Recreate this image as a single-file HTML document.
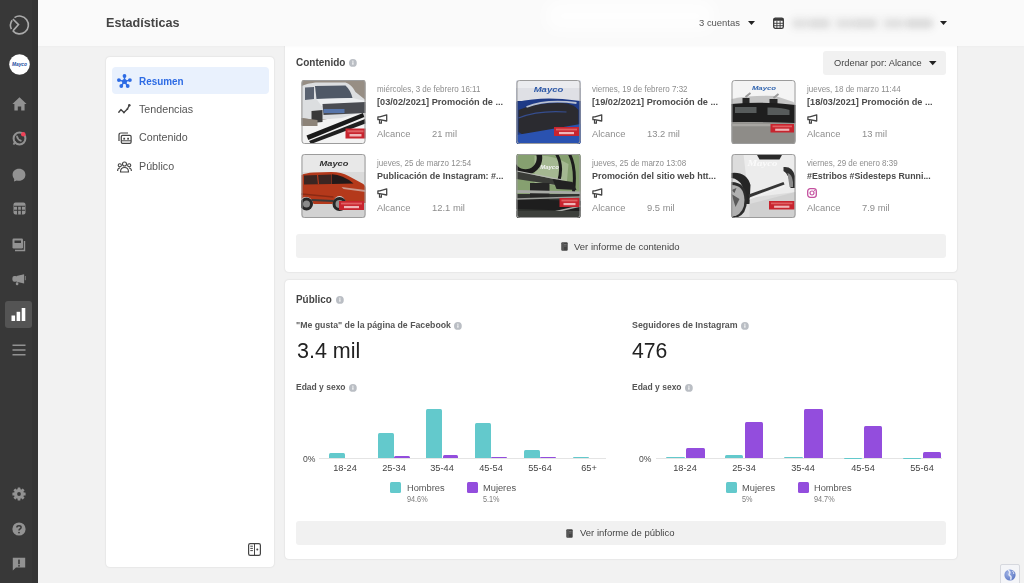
<!DOCTYPE html>
<html><head><meta charset="utf-8">
<style>
*{box-sizing:border-box;margin:0;padding:0}
html,body{width:1024px;height:583px;overflow:hidden;background:#f2f2f2;font-family:"Liberation Sans",sans-serif;color:#444}
.abs{position:absolute}
.t{position:absolute;white-space:nowrap;line-height:1}
.card{position:absolute;background:#fff;border-radius:4px;box-shadow:0 0 2px rgba(0,0,0,0.14)}
</style></head><body>

<div class="abs" style="left:0px;top:0px;width:38px;height:583px;background:#383838;"></div>
<div class="abs" style="left:32px;top:0px;width:6px;height:583px;background:#353535;"></div>
<svg class="abs" style="left:9.15px;top:15.2px;overflow:visible;" width="20" height="20" viewBox="0 0 20 20"><path d="M5.5 2.6 A8.9 8.9 0 1 1 3.85 15.9" fill="none" stroke="#ababab" stroke-width="1.6"/><path d="M3.2 5.2 A8.9 8.9 0 0 0 2.4 14.2" fill="none" stroke="#ababab" stroke-width="1.6"/><path d="M3.9 4.0 L9.5 9.6 L3.9 15.9" fill="none" stroke="#ababab" stroke-width="1.6" stroke-linejoin="miter"/></svg>
<svg class="abs" style="left:8.5px;top:54px;overflow:visible;" width="21" height="21" viewBox="0 0 21 21"><circle cx="10.5" cy="10.5" r="10.3" fill="#fff"/><text x="10.5" y="12.2" font-family="Liberation Sans" font-size="5.6" font-weight="bold" font-style="italic" fill="#1f4f9f" text-anchor="middle" textLength="15" lengthAdjust="spacingAndGlyphs">Mayco</text></svg>
<svg class="abs" style="left:11.8px;top:96.8px;overflow:visible;" width="15" height="14" viewBox="0 0 15 14"><path d="M7.5 0.3 L14.6 7 L12.6 7 L12.6 13.6 L9.2 13.6 L9.2 9.4 L5.8 9.4 L5.8 13.6 L2.4 13.6 L2.4 7 L0.4 7 Z" fill="#929292"/></svg>
<svg class="abs" style="left:11.5px;top:131px;overflow:visible;" width="15" height="15" viewBox="0 0 15 15"><circle cx="7.5" cy="7.5" r="5.9" fill="none" stroke="#929292" stroke-width="2"/><path d="M5 5.3 q0.6 3.2 3.8 4.4" fill="none" stroke="#929292" stroke-width="1.8" stroke-linecap="round"/><path d="M1.6 13.6 L3.2 10" stroke="#929292" stroke-width="1.8"/></svg>
<svg class="abs" style="left:21.2px;top:131.9px;overflow:visible;" width="5" height="5" viewBox="0 0 5 5"><circle cx="2.3" cy="2.3" r="2.3" fill="#ee4258"/></svg>
<svg class="abs" style="left:12px;top:167.5px;overflow:visible;" width="14" height="14" viewBox="0 0 14 14"><path d="M7 0.8 C10.8 0.8 13.4 3.3 13.4 6.8 C13.4 10.3 10.8 12.8 7 12.8 C6.2 12.8 5.5 12.7 4.8 12.5 L2 13.5 L2.2 11 C1.2 9.9 0.6 8.5 0.6 6.8 C0.6 3.3 3.2 0.8 7 0.8 Z" fill="#929292"/></svg>
<svg class="abs" style="left:12.5px;top:202px;overflow:visible;" width="13" height="13" viewBox="0 0 13 13"><rect x="0.5" y="0.5" width="12" height="12" rx="2" fill="#929292"/><path d="M1 4.3h11M1 8.3h11M4.6 4.3v8.5M8.4 4.3v8.5" stroke="#383838" stroke-width="1.1"/></svg>
<svg class="abs" style="left:12px;top:237.5px;overflow:visible;" width="14" height="14" viewBox="0 0 14 14"><rect x="0.5" y="0.5" width="10.5" height="10" rx="1.2" fill="#929292"/><path d="M12.5 3 v9.5 h-9.5" fill="none" stroke="#929292" stroke-width="1.4"/><rect x="2.5" y="2.5" width="6.5" height="2.5" fill="#383838"/></svg>
<svg class="abs" style="left:12px;top:272.5px;overflow:visible;" width="15" height="13" viewBox="0 0 15 13"><rect x="0.4" y="3" width="5" height="5.7" rx="2" fill="#929292"/><path d="M4.5 3 L12.1 1.2 V10.6 L4.5 8.7 Z" fill="#929292"/><rect x="3.8" y="9.3" width="2.6" height="3" rx="1.2" fill="#929292"/><rect x="12.8" y="3" width="1.1" height="4.2" fill="#929292" opacity="0.7"/></svg>
<div class="abs" style="left:5px;top:301px;width:27px;height:27px;background:#545454;border-radius:3px"></div>
<svg class="abs" style="left:11px;top:307px;overflow:visible;" width="15" height="14" viewBox="0 0 15 14"><rect x="0.5" y="8.5" width="3.6" height="5.5" fill="#fff"/><rect x="5.6" y="4.8" width="3.6" height="9.2" fill="#fff"/><rect x="10.7" y="1" width="3.6" height="13" fill="#fff"/></svg>
<svg class="abs" style="left:12px;top:344px;overflow:visible;" width="14" height="12" viewBox="0 0 14 12"><path d="M0.5 1.2h13M0.5 6h13M0.5 10.8h13" stroke="#929292" stroke-width="1.5"/></svg>
<svg class="abs" style="left:12px;top:487px;overflow:visible;" width="14" height="14" viewBox="0 0 14 14"><circle cx="7" cy="7" r="4.9" fill="#929292"/><rect x="5.6" y="0.4" width="2.8" height="3.2" rx="0.5" fill="#929292" transform="rotate(0 7 7)"/><rect x="5.6" y="0.4" width="2.8" height="3.2" rx="0.5" fill="#929292" transform="rotate(45 7 7)"/><rect x="5.6" y="0.4" width="2.8" height="3.2" rx="0.5" fill="#929292" transform="rotate(90 7 7)"/><rect x="5.6" y="0.4" width="2.8" height="3.2" rx="0.5" fill="#929292" transform="rotate(135 7 7)"/><rect x="5.6" y="0.4" width="2.8" height="3.2" rx="0.5" fill="#929292" transform="rotate(180 7 7)"/><rect x="5.6" y="0.4" width="2.8" height="3.2" rx="0.5" fill="#929292" transform="rotate(225 7 7)"/><rect x="5.6" y="0.4" width="2.8" height="3.2" rx="0.5" fill="#929292" transform="rotate(270 7 7)"/><rect x="5.6" y="0.4" width="2.8" height="3.2" rx="0.5" fill="#929292" transform="rotate(315 7 7)"/><circle cx="7" cy="7" r="1.9" fill="#383838"/></svg>
<svg class="abs" style="left:12px;top:522px;overflow:visible;" width="14" height="14" viewBox="0 0 14 14"><circle cx="7" cy="7" r="6.6" fill="#929292"/><path d="M4.9 5.4 C4.9 3.2 9.1 3.2 9.1 5.4 C9.1 6.9 7 6.9 7 8.6" fill="none" stroke="#383838" stroke-width="1.5"/><circle cx="7" cy="10.6" r="0.9" fill="#383838"/></svg>
<svg class="abs" style="left:12px;top:556.5px;overflow:visible;" width="14" height="14" viewBox="0 0 14 14"><path d="M0.8 0.8 H13.2 V10.5 H4 L0.8 13.4 Z" fill="#929292"/><rect x="6.2" y="2.6" width="1.6" height="4.6" fill="#383838"/><rect x="6.2" y="8.1" width="1.6" height="1.5" fill="#383838"/></svg>
<div class="card" style="left:106px;top:57px;width:168px;height:510px"></div>
<div class="abs" style="left:112px;top:67px;width:157px;height:27px;background:#e9f1fd;border-radius:4px"></div>
<svg class="abs" style="left:117px;top:74px;overflow:visible;" width="15" height="15" viewBox="0 0 15 15"><path d="M7.5 7.5 L7.5 2 M7.5 7.5 L1.8 6.1 M7.5 7.5 L12.8 6.1 M7.5 7.5 L4.2 12 M7.5 7.5 L10.6 12" stroke="#2d6be4" stroke-width="1.4"/><circle cx="7.5" cy="7.5" r="2.5" fill="#2d6be4"/><circle cx="7.5" cy="2" r="1.9" fill="#2d6be4"/><circle cx="1.9" cy="6.1" r="1.9" fill="#2d6be4"/><circle cx="12.9" cy="6.1" r="1.9" fill="#2d6be4"/><circle cx="4.3" cy="12" r="1.9" fill="#2d6be4"/><circle cx="10.7" cy="12" r="1.9" fill="#2d6be4"/></svg>
<div class="t" style="left:138.50px;top:75.76px;font-size:10.69px;font-weight:bold;color:#2d6be4;transform-origin:0 50%;transform:scaleX(0.9259);">Resumen</div>
<svg class="abs" style="left:118px;top:104px;overflow:visible;" width="13" height="10" viewBox="0 0 13 10"><path d="M0.8 8.3 L2.9 5.6 L5.9 8.4 L9.4 5 L11.3 1.3" fill="none" stroke="#444" stroke-width="1.4" stroke-linejoin="round" stroke-linecap="round"/><circle cx="11.3" cy="1.3" r="1.25" fill="#444"/><circle cx="5.9" cy="8.4" r="0.9" fill="#444"/><circle cx="9.4" cy="5" r="0.9" fill="#444"/></svg>
<div class="t" style="left:138.50px;top:103.55px;font-size:11.13px;font-weight:normal;color:#555;transform-origin:0 50%;transform:scaleX(0.9615);">Tendencias</div>
<svg class="abs" style="left:117.5px;top:131.5px;overflow:visible;" width="14" height="12" viewBox="0 0 14 12"><path d="M1 9 V3 Q1 1 3 1 H10" fill="none" stroke="#444" stroke-width="1.2"/><rect x="3.3" y="3.3" width="9.8" height="8" rx="1.3" fill="none" stroke="#444" stroke-width="1.2"/><rect x="5.3" y="5.8" width="1.8" height="1.8" fill="#444"/><rect x="9.2" y="5.8" width="1.8" height="1.8" fill="#444"/><path d="M3.5 8.8h9.5" stroke="#444" stroke-width="1"/></svg>
<div class="t" style="left:138.50px;top:132.05px;font-size:11.13px;font-weight:normal;color:#555;transform-origin:0 50%;transform:scaleX(0.9615);">Contenido</div>
<svg class="abs" style="left:117px;top:160.5px;overflow:visible;" width="15" height="12" viewBox="0 0 15 12"><circle cx="7.5" cy="3" r="2" fill="none" stroke="#444" stroke-width="1.1"/><circle cx="2.8" cy="4.3" r="1.6" fill="none" stroke="#444" stroke-width="1.1"/><circle cx="12.2" cy="4.3" r="1.6" fill="none" stroke="#444" stroke-width="1.1"/><path d="M3.5 11 Q3.5 6.5 7.5 6.5 Q11.5 6.5 11.5 11 Z" fill="none" stroke="#444" stroke-width="1.1"/><path d="M0.6 10 Q0.6 7 3 7 M14.4 10 Q14.4 7 12 7" fill="none" stroke="#444" stroke-width="1.1"/></svg>
<div class="t" style="left:138.50px;top:160.55px;font-size:11.13px;font-weight:normal;color:#555;transform-origin:0 50%;transform:scaleX(0.9615);">Público</div>
<svg class="abs" style="left:248px;top:543px;overflow:visible;" width="13" height="13" viewBox="0 0 13 13"><rect x="0.6" y="0.6" width="11.8" height="11.8" rx="1.6" fill="none" stroke="#444" stroke-width="1.2"/><path d="M6.5 0.6v11.8M2.3 3.2h2.6M2.3 5.4h2.6M2.3 7.6h2.6" stroke="#444" stroke-width="1"/><circle cx="9.3" cy="6.5" r="1" fill="#444"/></svg>
<div class="card" style="left:285px;top:40px;width:672px;height:232px"></div>
<div class="t" style="left:296.00px;top:57.21px;font-size:10.80px;font-weight:bold;color:#444;transform-origin:0 50%;transform:scaleX(0.9259);">Contenido</div>
<svg class="abs" style="left:348.6px;top:59.0px;overflow:visible;" width="7.8" height="7.8" viewBox="0 0 7.8 7.8"><circle cx="3.9" cy="3.9" r="3.9" fill="#babec4"/><rect x="3.3499999999999996" y="3.3" width="1.1" height="2.4" fill="#fff"/><circle cx="3.9" cy="2.2" r="0.6" fill="#fff"/></svg>
<div class="abs" style="left:823px;top:51px;width:123px;height:24px;background:#f1f1f1;border-radius:3px"></div>
<div class="t" style="left:834.00px;top:58.26px;font-size:9.67px;font-weight:normal;color:#444;transform-origin:0 50%;transform:scaleX(0.9615);">Ordenar por: Alcance</div>
<svg class="abs" style="left:928.75px;top:60.9px;overflow:visible;" width="7.5" height="4.2" viewBox="0 0 7.5 4.2"><path d="M0 0 L7.5 0 L3.75 4.2 Z" fill="#222"/></svg>
<!--thumb0-->
<svg class="abs" style="left:301px;top:80px;overflow:visible;border-radius:3px;overflow:hidden;filter:blur(0.45px)" width="65" height="64" viewBox="0 0 64 64"><rect width="64" height="64" fill="#f3f3f3"/><path d="M0 0 H64 V30 L0 45 Z" fill="#978e84"/><path d="M0 6 Q6 3 14 2.5 L44 2.5 Q50 4 54 12 L64 20 L64 31 L40 38 L14 40 L0 38 Z" fill="#dcdee0"/><path d="M13.5 6 L44 5.5 Q49 10 51 18 L15 19 Z" fill="#4f5866"/><path d="M3.5 7.5 L12.5 7 L12.5 19 L3.5 20 Z" fill="#5a6270"/><path d="M15 19 L51 18 L64 21 L64 25 L20 26 Z" fill="#eceef0"/><path d="M21 24 L64 22 L64 33 L22 35 Z" fill="#4a4c52"/><rect x="22" y="29" width="21" height="4" fill="#5a7fc0" opacity="0.8"/><path d="M10 31 L21 30 L21 42 L10 43 Z" fill="#3a3a3a"/><path d="M0 38 L16 40 L16 46 L0 46 Z" fill="#8c8378"/><path d="M5 55.5 L61.5 33 L62.8 37 L6.8 60 Z" fill="#1a1a1a"/><path d="M7.5 61 L63.5 39 L64 43.5 L9.5 64 Z" fill="#202020"/><rect x="44" y="48.5" width="20" height="10" fill="#c8242e"/><rect x="46" y="50.3" width="16" height="2.0" fill="#e87a7a" opacity="0.7"/><rect x="48.0" y="54.0" width="12.0" height="2.5" fill="#f6d0d0" opacity="0.85"/><rect x="0.5" y="0.5" width="63" height="63" rx="2.5" fill="none" stroke="#9c9c9c" stroke-width="1"/></svg>
<div class="t" style="left:377.00px;top:84.92px;font-size:8.32px;font-weight:normal;color:#8d8d8d;transform-origin:0 50%;transform:scaleX(0.9615);">miércoles, 3 de febrero 16:11</div>
<div class="t" style="left:377.00px;top:96.63px;font-size:9.94px;font-weight:bold;color:#4a4a4a;transform-origin:0 50%;transform:scaleX(0.9259);">[03/02/2021] Promoción de ...</div>
<svg class="abs" style="left:377px;top:113.5px;overflow:visible;" width="11" height="10" viewBox="0 0 11 10"><path d="M0.9 2.9 H2.8 L9.7 0.8 V7.0 L2.8 5.7 H0.9 Z" fill="none" stroke="#444" stroke-width="1.3" stroke-linejoin="round"/><path d="M2.5 5.9 V9.1 H4.4 V6.3" fill="none" stroke="#444" stroke-width="1.2"/></svg>
<div class="t" style="left:377.00px;top:129.21px;font-size:9.78px;font-weight:normal;color:#8d8d8d;transform-origin:0 50%;transform:scaleX(0.9615);">Alcance</div>
<div class="t" style="left:431.50px;top:129.21px;font-size:9.78px;font-weight:normal;color:#8d8d8d;transform-origin:0 50%;transform:scaleX(0.9615);">21 mil</div>
<!--thumb1-->
<svg class="abs" style="left:516px;top:80px;overflow:visible;border-radius:3px;overflow:hidden;filter:blur(0.45px)" width="65" height="64" viewBox="0 0 64 64"><rect width="64" height="64" fill="#1d3070"/><rect width="64" height="21" fill="#dfe0e5"/><rect width="64" height="8" fill="#ebecef"/><text x="32" y="11.5" font-family="Liberation Sans" font-size="7.6" font-weight="bold" font-style="italic" fill="#2f5aa8" text-anchor="middle" textLength="29.639999999999997" lengthAdjust="spacingAndGlyphs">Mayco</text><path d="M0 22 Q22 17 46 19 L64 21 V64 H0 Z" fill="#1e3a86"/><path d="M2 30 Q20 22 46 23 Q58 24 62 30 L62 50 Q40 54 10 57 L2 52 Z" fill="#2b2b30"/><path d="M10 27 Q30 19 60 23" fill="none" stroke="#b8c0d0" stroke-width="1.8"/><path d="M2 38 Q22 30 50 32" fill="none" stroke="#3a5cb8" stroke-width="1.2" opacity="0.7"/><path d="M0 55 Q30 50 64 44 V64 H0 Z" fill="#2a52b0"/><rect x="37.5" y="47" width="25" height="9" fill="#c8242e"/><rect x="39.5" y="48.62" width="21" height="1.8" fill="#e87a7a" opacity="0.7"/><rect x="42.5" y="51.95" width="15.0" height="2.25" fill="#f6d0d0" opacity="0.85"/><rect x="0.5" y="0.5" width="63" height="63" rx="2.5" fill="none" stroke="#9c9c9c" stroke-width="1"/></svg>
<div class="t" style="left:592.00px;top:84.92px;font-size:8.32px;font-weight:normal;color:#8d8d8d;transform-origin:0 50%;transform:scaleX(0.9615);">viernes, 19 de febrero 7:32</div>
<div class="t" style="left:592.00px;top:96.63px;font-size:9.94px;font-weight:bold;color:#4a4a4a;transform-origin:0 50%;transform:scaleX(0.9259);">[19/02/2021] Promoción de ...</div>
<svg class="abs" style="left:592px;top:113.5px;overflow:visible;" width="11" height="10" viewBox="0 0 11 10"><path d="M0.9 2.9 H2.8 L9.7 0.8 V7.0 L2.8 5.7 H0.9 Z" fill="none" stroke="#444" stroke-width="1.3" stroke-linejoin="round"/><path d="M2.5 5.9 V9.1 H4.4 V6.3" fill="none" stroke="#444" stroke-width="1.2"/></svg>
<div class="t" style="left:592.00px;top:129.21px;font-size:9.78px;font-weight:normal;color:#8d8d8d;transform-origin:0 50%;transform:scaleX(0.9615);">Alcance</div>
<div class="t" style="left:646.50px;top:129.21px;font-size:9.78px;font-weight:normal;color:#8d8d8d;transform-origin:0 50%;transform:scaleX(0.9615);">13.2 mil</div>
<!--thumb2-->
<svg class="abs" style="left:731px;top:80px;overflow:visible;border-radius:3px;overflow:hidden;filter:blur(0.45px)" width="65" height="64" viewBox="0 0 64 64"><rect width="64" height="64" fill="#f4f4f4"/><text x="32.5" y="10" font-family="Liberation Sans" font-size="6.2" font-weight="bold" font-style="italic" fill="#3366b0" text-anchor="middle" textLength="24.18" lengthAdjust="spacingAndGlyphs">Mayco</text><path d="M0 19 Q20 15 44 16 L62 22 L64 26 H0 Z" fill="#c4c4c4"/><path d="M11 18 L18 18 L18 24 L11 24 Z M38 19 L46 19 L46 25 L38 25 Z" fill="#262626"/><path d="M14 17 L19 13 M42 18 L47 14" stroke="#9a9a9a" stroke-width="2"/><path d="M0 24 Q32 21 64 25 L64 43 L0 42 Z" fill="#1e1e1e"/><path d="M3.5 27 H25 V33 H3.5 Z M36 27.5 Q50 27 58 30 V35 H36 Z" fill="#575b5b"/><path d="M0 42 L64 43 L64 64 L0 64 Z" fill="#8e8c88"/><path d="M0 45 L64 45" stroke="#a8a6a2" stroke-width="2.5"/><rect x="39" y="44" width="23.5" height="8.5" fill="#c8242e"/><rect x="41" y="45.53" width="19.5" height="1.7000000000000002" fill="#e87a7a" opacity="0.7"/><rect x="43.7" y="48.675" width="14.1" height="2.125" fill="#f6d0d0" opacity="0.85"/><rect x="0.5" y="0.5" width="63" height="63" rx="2.5" fill="none" stroke="#9c9c9c" stroke-width="1"/></svg>
<div class="t" style="left:807.00px;top:84.92px;font-size:8.32px;font-weight:normal;color:#8d8d8d;transform-origin:0 50%;transform:scaleX(0.9615);">jueves, 18 de marzo 11:44</div>
<div class="t" style="left:807.00px;top:96.63px;font-size:9.94px;font-weight:bold;color:#4a4a4a;transform-origin:0 50%;transform:scaleX(0.9222);">[18/03/2021] Promoción de ...</div>
<svg class="abs" style="left:807px;top:113.5px;overflow:visible;" width="11" height="10" viewBox="0 0 11 10"><path d="M0.9 2.9 H2.8 L9.7 0.8 V7.0 L2.8 5.7 H0.9 Z" fill="none" stroke="#444" stroke-width="1.3" stroke-linejoin="round"/><path d="M2.5 5.9 V9.1 H4.4 V6.3" fill="none" stroke="#444" stroke-width="1.2"/></svg>
<div class="t" style="left:807.00px;top:129.21px;font-size:9.78px;font-weight:normal;color:#8d8d8d;transform-origin:0 50%;transform:scaleX(0.9615);">Alcance</div>
<div class="t" style="left:861.50px;top:129.21px;font-size:9.78px;font-weight:normal;color:#8d8d8d;transform-origin:0 50%;transform:scaleX(0.9615);">13 mil</div>
<!--thumb3-->
<svg class="abs" style="left:301px;top:154px;overflow:visible;border-radius:3px;overflow:hidden;filter:blur(0.45px)" width="65" height="64" viewBox="0 0 64 64"><rect width="64" height="64" fill="#dadada"/><rect width="64" height="18" fill="#e8e8e8"/><text x="32.5" y="12" font-family="Liberation Sans" font-size="7.4" font-weight="bold" font-style="italic" fill="#2e2e2e" text-anchor="middle" textLength="28.86" lengthAdjust="spacingAndGlyphs">Mayco</text><rect x="0" y="50" width="64" height="14" fill="#d2d2d2"/><path d="M0 21 Q4 19 12 18.5 L30 18 Q40 18 47 22 L60 29 Q64 31 64 34 L64 49 L45 50 Q43 42 38 42 Q33 42 31 50 L12 50 Q10 43 5 43 Q1 43 0 45 Z" fill="#b4391b"/><path d="M2.5 21.5 L30 20.5 L30 30 L2.5 30.5 Z" fill="#3c2622"/><path d="M16 21 L17 30.3" stroke="#b4391b" stroke-width="1.2"/><path d="M30.5 20.3 Q41 20.5 52 29.5 L30.5 30 Z" fill="#241a1a"/><path d="M40 33 L64 36 L64 38 L42 35 Z" fill="#d8d8d8" opacity="0.6"/><path d="M0 40 L32 43" stroke="#8a2a14" stroke-width="1.5"/><path d="M10 46 L32 47" stroke="#3a3a3a" stroke-width="2"/><circle cx="5" cy="50" r="6.5" fill="#262626"/><circle cx="5" cy="50" r="3.5" fill="#8a8a8a"/><circle cx="38" cy="50" r="7" fill="#262626"/><circle cx="38" cy="50" r="4" fill="#909090"/><rect x="37.5" y="47" width="25" height="9" fill="#c8242e"/><rect x="39.5" y="48.62" width="21" height="1.8" fill="#e87a7a" opacity="0.7"/><rect x="42.5" y="51.95" width="15.0" height="2.25" fill="#f6d0d0" opacity="0.85"/><rect x="0.5" y="0.5" width="63" height="63" rx="2.5" fill="none" stroke="#9c9c9c" stroke-width="1"/></svg>
<div class="t" style="left:377.00px;top:158.92px;font-size:8.32px;font-weight:normal;color:#8d8d8d;transform-origin:0 50%;transform:scaleX(0.9615);">jueves, 25 de marzo 12:54</div>
<div class="t" style="left:377.00px;top:170.63px;font-size:9.94px;font-weight:bold;color:#4a4a4a;transform-origin:0 50%;transform:scaleX(0.9037);">Publicación de Instagram: #...</div>
<svg class="abs" style="left:377px;top:187.5px;overflow:visible;" width="11" height="10" viewBox="0 0 11 10"><path d="M0.9 2.9 H2.8 L9.7 0.8 V7.0 L2.8 5.7 H0.9 Z" fill="none" stroke="#444" stroke-width="1.3" stroke-linejoin="round"/><path d="M2.5 5.9 V9.1 H4.4 V6.3" fill="none" stroke="#444" stroke-width="1.2"/></svg>
<div class="t" style="left:377.00px;top:203.21px;font-size:9.78px;font-weight:normal;color:#8d8d8d;transform-origin:0 50%;transform:scaleX(0.9615);">Alcance</div>
<div class="t" style="left:431.50px;top:203.21px;font-size:9.78px;font-weight:normal;color:#8d8d8d;transform-origin:0 50%;transform:scaleX(0.9615);">12.1 mil</div>
<!--thumb4-->
<svg class="abs" style="left:516px;top:154px;overflow:visible;border-radius:3px;overflow:hidden;filter:blur(0.45px)" width="65" height="64" viewBox="0 0 64 64"><rect width="64" height="64" fill="#30332f"/><path d="M0 0 H64 V40 H0 Z" fill="#86a070"/><path d="M18 2 Q36 0 52 10 L50 32 L18 30 Z" fill="#a9bc96" opacity="0.85"/><circle cx="9" cy="4" r="14" fill="none" stroke="#1c1c1c" stroke-width="5.5"/><path d="M40 0 Q47 12 42 28 M53 0 Q60 14 57 38" fill="none" stroke="#1c1c1c" stroke-width="3"/><text x="33" y="14.5" font-family="Liberation Sans" font-size="6" font-weight="bold" font-style="italic" fill="#f2f2f2" text-anchor="middle">Mayco</text><path d="M0 17 L46 27 L46 32 L0 25 Z" fill="#3a3c38"/><path d="M0 17 L46 26" stroke="#b8bab6" stroke-width="1.2"/><rect x="13.5" y="29" width="19.5" height="17" fill="#262626"/><path d="M36 25 L56 28 L60 36 L40 35 Z" fill="#222"/><path d="M0 36 L64 37.5 L64 40 L0 39 Z" fill="#a8aaa6"/><path d="M0 45 L64 47 L64 57 L0 55 Z" fill="#1e1e1e"/><path d="M0 45 L64 43" stroke="#9a9c98" stroke-width="1.3"/><path d="M20 62 L64 52" stroke="#a8aaa6" stroke-width="1.5"/><path d="M0 57 L64 57 L64 64 L0 64 Z" fill="#3d403c"/><rect x="43" y="44" width="20" height="9" fill="#c8242e"/><rect x="45" y="45.62" width="16" height="1.8" fill="#e87a7a" opacity="0.7"/><rect x="47.0" y="48.95" width="12.0" height="2.25" fill="#f6d0d0" opacity="0.85"/><rect x="0.5" y="0.5" width="63" height="63" rx="2.5" fill="none" stroke="#9c9c9c" stroke-width="1"/></svg>
<div class="t" style="left:592.00px;top:158.92px;font-size:8.32px;font-weight:normal;color:#8d8d8d;transform-origin:0 50%;transform:scaleX(0.9615);">jueves, 25 de marzo 13:08</div>
<div class="t" style="left:592.00px;top:170.63px;font-size:9.94px;font-weight:bold;color:#4a4a4a;transform-origin:0 50%;transform:scaleX(0.9000);">Promoción del sitio web htt...</div>
<svg class="abs" style="left:592px;top:187.5px;overflow:visible;" width="11" height="10" viewBox="0 0 11 10"><path d="M0.9 2.9 H2.8 L9.7 0.8 V7.0 L2.8 5.7 H0.9 Z" fill="none" stroke="#444" stroke-width="1.3" stroke-linejoin="round"/><path d="M2.5 5.9 V9.1 H4.4 V6.3" fill="none" stroke="#444" stroke-width="1.2"/></svg>
<div class="t" style="left:592.00px;top:203.21px;font-size:9.78px;font-weight:normal;color:#8d8d8d;transform-origin:0 50%;transform:scaleX(0.9615);">Alcance</div>
<div class="t" style="left:646.50px;top:203.21px;font-size:9.78px;font-weight:normal;color:#8d8d8d;transform-origin:0 50%;transform:scaleX(0.9615);">9.5 mil</div>
<!--thumb5-->
<svg class="abs" style="left:731px;top:154px;overflow:visible;border-radius:3px;overflow:hidden;filter:blur(0.45px)" width="65" height="64" viewBox="0 0 64 64"><rect width="64" height="64" fill="#dcdcdc"/><path d="M12 0 H64 V38 L17 44 Z" fill="#ececec"/><path d="M25 0 L28 5.5 L48 5.5 L51 0 Z" fill="#2a2a2a"/><text x="31" y="11.5" font-family="Liberation Serif" font-size="8.5" font-weight="bold" font-style="italic" fill="#fafafa" text-anchor="middle" textLength="30" lengthAdjust="spacingAndGlyphs">Mayco</text><path d="M0 19 Q15 17.5 19 31 L18 50 L14 50 Q14 26 0 24 Z" fill="#262626"/><path d="M0 28 Q15 28 15.5 46 Q15.5 60 5 64 L0 64 Z" fill="#2c2c2c"/><path d="M0 31 Q12.5 31 13 46 Q13 58 4 62 L0 62 Z" fill="#b0b0b0"/><path d="M0 40 L8 45 L4 53 Z M0 36 L5 34 L3 39 Z" fill="#5a5a5a"/><path d="M17 40.5 L52 28 L53 30.5 L18 43.5 Z" fill="#353535"/><path d="M18 45 L53 32" stroke="#f4f4f4" stroke-width="1"/><path d="M52 13 Q61 12 63.5 22 L63.5 34 L59 34 Q58 20 52 17 Z" fill="#2f2f2f"/><path d="M56 19 Q60.5 20 61.5 28 L61.5 33 L58 33 Z" fill="#8c8c8c"/><path d="M18 50 L64 38 L64 64 L18 64 Z" fill="#d0d0d0"/><rect x="37.5" y="47" width="25.5" height="8.5" fill="#c8242e"/><rect x="39.5" y="48.53" width="21.5" height="1.7000000000000002" fill="#e87a7a" opacity="0.7"/><rect x="42.6" y="51.675" width="15.299999999999999" height="2.125" fill="#f6d0d0" opacity="0.85"/><rect x="0.5" y="0.5" width="63" height="63" rx="2.5" fill="none" stroke="#9c9c9c" stroke-width="1"/></svg>
<div class="t" style="left:807.00px;top:158.92px;font-size:8.32px;font-weight:normal;color:#8d8d8d;transform-origin:0 50%;transform:scaleX(0.9615);">viernes, 29 de enero 8:39</div>
<div class="t" style="left:807.00px;top:170.63px;font-size:9.94px;font-weight:bold;color:#4a4a4a;transform-origin:0 50%;transform:scaleX(0.8870);">#Estribos #Sidesteps Runni...</div>
<svg class="abs" style="left:807px;top:187.5px;overflow:visible;" width="10" height="10" viewBox="0 0 10 10"><rect x="0.7" y="0.7" width="8.6" height="8.6" rx="2.5" fill="none" stroke="#c4509f" stroke-width="1.3"/><circle cx="5" cy="5" r="2" fill="none" stroke="#c4509f" stroke-width="1.2"/><circle cx="7.4" cy="2.6" r="0.6" fill="#c4509f"/></svg>
<div class="t" style="left:807.00px;top:203.21px;font-size:9.78px;font-weight:normal;color:#8d8d8d;transform-origin:0 50%;transform:scaleX(0.9615);">Alcance</div>
<div class="t" style="left:861.50px;top:203.21px;font-size:9.78px;font-weight:normal;color:#8d8d8d;transform-origin:0 50%;transform:scaleX(0.9615);">7.9 mil</div>
<div class="abs" style="left:296px;top:234px;width:650px;height:24px;background:#f1f1f1;border-radius:3px"></div>
<svg class="abs" style="left:561px;top:241.5px;overflow:visible;" width="7" height="9" viewBox="0 0 7 9"><rect x="0.3" y="0.3" width="6.4" height="8.4" rx="1" fill="#444"/><path d="M2 0.5v8" stroke="#888" stroke-width="0.6"/><path d="M3 2.5h2.6M3 4h2.6" stroke="#999" stroke-width="0.5"/></svg>
<div class="t" style="left:574.00px;top:241.66px;font-size:9.88px;font-weight:normal;color:#444;transform-origin:0 50%;transform:scaleX(0.9615);">Ver informe de contenido</div>
<div class="card" style="left:285px;top:280px;width:672px;height:279px"></div>
<div class="t" style="left:296.00px;top:294.06px;font-size:10.69px;font-weight:bold;color:#444;transform-origin:0 50%;transform:scaleX(0.9259);">Público</div>
<svg class="abs" style="left:335.6px;top:296.0px;overflow:visible;" width="7.8" height="7.8" viewBox="0 0 7.8 7.8"><circle cx="3.9" cy="3.9" r="3.9" fill="#babec4"/><rect x="3.3499999999999996" y="3.3" width="1.1" height="2.4" fill="#fff"/><circle cx="3.9" cy="2.2" r="0.6" fill="#fff"/></svg>
<div class="t" style="left:296.00px;top:320.37px;font-size:9.45px;font-weight:bold;color:#555;transform-origin:0 50%;transform:scaleX(0.9259);">"Me gusta" de la página de Facebook</div>
<svg class="abs" style="left:454.1px;top:321.5px;overflow:visible;" width="7.8" height="7.8" viewBox="0 0 7.8 7.8"><circle cx="3.9" cy="3.9" r="3.9" fill="#babec4"/><rect x="3.3499999999999996" y="3.3" width="1.1" height="2.4" fill="#fff"/><circle cx="3.9" cy="2.2" r="0.6" fill="#fff"/></svg>
<div class="t" style="left:296.50px;top:339.74px;font-size:22.36px;font-weight:normal;color:#222;transform-origin:0 50%;transform:scaleX(0.9615);">3.4 mil</div>
<div class="t" style="left:296.00px;top:382.90px;font-size:9.18px;font-weight:bold;color:#555;transform-origin:0 50%;transform:scaleX(0.9259);">Edad y sexo</div>
<svg class="abs" style="left:349.1px;top:383.7px;overflow:visible;" width="7.8" height="7.8" viewBox="0 0 7.8 7.8"><circle cx="3.9" cy="3.9" r="3.9" fill="#babec4"/><rect x="3.3499999999999996" y="3.3" width="1.1" height="2.4" fill="#fff"/><circle cx="3.9" cy="2.2" r="0.6" fill="#fff"/></svg>
<div class="t" style="left:632.00px;top:320.32px;font-size:9.55px;font-weight:bold;color:#555;transform-origin:0 50%;transform:scaleX(0.9259);">Seguidores de Instagram</div>
<svg class="abs" style="left:741.1px;top:321.5px;overflow:visible;" width="7.8" height="7.8" viewBox="0 0 7.8 7.8"><circle cx="3.9" cy="3.9" r="3.9" fill="#babec4"/><rect x="3.3499999999999996" y="3.3" width="1.1" height="2.4" fill="#fff"/><circle cx="3.9" cy="2.2" r="0.6" fill="#fff"/></svg>
<div class="t" style="left:632.00px;top:339.92px;font-size:22.00px;font-weight:normal;color:#222;transform-origin:0 50%;transform:scaleX(0.9615);">476</div>
<div class="t" style="left:632.00px;top:382.90px;font-size:9.18px;font-weight:bold;color:#555;transform-origin:0 50%;transform:scaleX(0.9259);">Edad y sexo</div>
<svg class="abs" style="left:685.1px;top:383.7px;overflow:visible;" width="7.8" height="7.8" viewBox="0 0 7.8 7.8"><circle cx="3.9" cy="3.9" r="3.9" fill="#babec4"/><rect x="3.3499999999999996" y="3.3" width="1.1" height="2.4" fill="#fff"/><circle cx="3.9" cy="2.2" r="0.6" fill="#fff"/></svg>
<div class="t" style="left:303.00px;top:454.25px;font-size:9.69px;font-weight:normal;color:#4a4a4a;transform-origin:0 50%;transform:scaleX(0.8929);">0%</div>
<div class="abs" style="left:319px;top:458px;width:287px;height:1px;background:#e4e4e4;"></div>
<div class="abs" style="left:329.00px;top:453.00px;width:15.50px;height:5.00px;background:#63c9cc;border-radius:1.5px 1.5px 0 0"></div>
<div class="t" style="left:285.00px;width:120px;text-align:center;top:462.81px;font-size:9.57px;font-weight:normal;color:#444;transform-origin:50% 50%;transform:scaleX(0.9615);">18-24</div>
<div class="abs" style="left:378.00px;top:432.50px;width:15.50px;height:25.50px;background:#63c9cc;border-radius:1.5px 1.5px 0 0"></div>
<div class="abs" style="left:394.20px;top:455.60px;width:15.50px;height:2.40px;background:#934ddd;border-radius:1.5px 1.5px 0 0"></div>
<div class="t" style="left:334.00px;width:120px;text-align:center;top:462.81px;font-size:9.57px;font-weight:normal;color:#444;transform-origin:50% 50%;transform:scaleX(0.9615);">25-34</div>
<div class="abs" style="left:426.30px;top:409.40px;width:15.50px;height:48.60px;background:#63c9cc;border-radius:1.5px 1.5px 0 0"></div>
<div class="abs" style="left:442.50px;top:455.00px;width:15.50px;height:3.00px;background:#934ddd;border-radius:1.5px 1.5px 0 0"></div>
<div class="t" style="left:382.30px;width:120px;text-align:center;top:462.81px;font-size:9.57px;font-weight:normal;color:#444;transform-origin:50% 50%;transform:scaleX(0.9615);">35-44</div>
<div class="abs" style="left:475.00px;top:423.00px;width:15.50px;height:35.00px;background:#63c9cc;border-radius:1.5px 1.5px 0 0"></div>
<div class="abs" style="left:491.20px;top:457.00px;width:15.50px;height:1.00px;background:#934ddd;border-radius:1.5px 1.5px 0 0"></div>
<div class="t" style="left:431.00px;width:120px;text-align:center;top:462.81px;font-size:9.57px;font-weight:normal;color:#444;transform-origin:50% 50%;transform:scaleX(0.9615);">45-54</div>
<div class="abs" style="left:524.00px;top:450.20px;width:15.50px;height:7.80px;background:#63c9cc;border-radius:1.5px 1.5px 0 0"></div>
<div class="abs" style="left:540.20px;top:457.00px;width:15.50px;height:1.00px;background:#934ddd;border-radius:1.5px 1.5px 0 0"></div>
<div class="t" style="left:480.00px;width:120px;text-align:center;top:462.81px;font-size:9.57px;font-weight:normal;color:#444;transform-origin:50% 50%;transform:scaleX(0.9615);">55-64</div>
<div class="abs" style="left:573.00px;top:457.00px;width:15.50px;height:1.00px;background:#63c9cc;border-radius:1.5px 1.5px 0 0"></div>
<div class="t" style="left:529.00px;width:120px;text-align:center;top:462.81px;font-size:9.57px;font-weight:normal;color:#444;transform-origin:50% 50%;transform:scaleX(0.9615);">65+</div>
<div class="abs" style="left:390px;top:482px;width:11px;height:11px;background:#63c9cc;border-radius:1.5px"></div>
<div class="t" style="left:406.60px;top:482.56px;font-size:9.67px;font-weight:normal;color:#555;transform-origin:0 50%;transform:scaleX(0.9615);">Hombres</div>
<div class="t" style="left:406.60px;top:494.89px;font-size:8.39px;font-weight:normal;color:#7c7c7c;transform-origin:0 50%;transform:scaleX(0.8696);">94.6%</div>
<div class="abs" style="left:466.5px;top:482px;width:11px;height:11px;background:#934ddd;border-radius:1.5px"></div>
<div class="t" style="left:483.00px;top:482.56px;font-size:9.67px;font-weight:normal;color:#555;transform-origin:0 50%;transform:scaleX(0.9615);">Mujeres</div>
<div class="t" style="left:483.00px;top:494.89px;font-size:8.39px;font-weight:normal;color:#7c7c7c;transform-origin:0 50%;transform:scaleX(0.8696);">5.1%</div>
<div class="t" style="left:639.20px;top:454.25px;font-size:9.69px;font-weight:normal;color:#4a4a4a;transform-origin:0 50%;transform:scaleX(0.8929);">0%</div>
<div class="abs" style="left:656px;top:458px;width:286px;height:1px;background:#e4e4e4;"></div>
<div class="abs" style="left:666.00px;top:457.00px;width:18.50px;height:1.00px;background:#63c9cc;border-radius:1.5px 1.5px 0 0"></div>
<div class="abs" style="left:686.00px;top:448.10px;width:18.80px;height:9.90px;background:#934ddd;border-radius:1.5px 1.5px 0 0"></div>
<div class="t" style="left:625.20px;width:120px;text-align:center;top:462.81px;font-size:9.57px;font-weight:normal;color:#444;transform-origin:50% 50%;transform:scaleX(0.9615);">18-24</div>
<div class="abs" style="left:724.50px;top:454.70px;width:18.50px;height:3.30px;background:#63c9cc;border-radius:1.5px 1.5px 0 0"></div>
<div class="abs" style="left:744.50px;top:421.70px;width:18.80px;height:36.30px;background:#934ddd;border-radius:1.5px 1.5px 0 0"></div>
<div class="t" style="left:683.70px;width:120px;text-align:center;top:462.81px;font-size:9.57px;font-weight:normal;color:#444;transform-origin:50% 50%;transform:scaleX(0.9615);">25-34</div>
<div class="abs" style="left:784.00px;top:457.00px;width:18.50px;height:1.00px;background:#63c9cc;border-radius:1.5px 1.5px 0 0"></div>
<div class="abs" style="left:804.00px;top:409.40px;width:18.80px;height:48.60px;background:#934ddd;border-radius:1.5px 1.5px 0 0"></div>
<div class="t" style="left:743.20px;width:120px;text-align:center;top:462.81px;font-size:9.57px;font-weight:normal;color:#444;transform-origin:50% 50%;transform:scaleX(0.9615);">35-44</div>
<div class="abs" style="left:843.50px;top:457.50px;width:18.50px;height:0.50px;background:#63c9cc;border-radius:1.5px 1.5px 0 0"></div>
<div class="abs" style="left:863.50px;top:425.80px;width:18.80px;height:32.20px;background:#934ddd;border-radius:1.5px 1.5px 0 0"></div>
<div class="t" style="left:802.70px;width:120px;text-align:center;top:462.81px;font-size:9.57px;font-weight:normal;color:#444;transform-origin:50% 50%;transform:scaleX(0.9615);">45-54</div>
<div class="abs" style="left:902.50px;top:457.50px;width:18.50px;height:0.50px;background:#63c9cc;border-radius:1.5px 1.5px 0 0"></div>
<div class="abs" style="left:922.50px;top:451.90px;width:18.80px;height:6.10px;background:#934ddd;border-radius:1.5px 1.5px 0 0"></div>
<div class="t" style="left:861.70px;width:120px;text-align:center;top:462.81px;font-size:9.57px;font-weight:normal;color:#444;transform-origin:50% 50%;transform:scaleX(0.9615);">55-64</div>
<div class="abs" style="left:726.3px;top:482px;width:11px;height:11px;background:#63c9cc;border-radius:1.5px"></div>
<div class="t" style="left:742.40px;top:482.56px;font-size:9.67px;font-weight:normal;color:#555;transform-origin:0 50%;transform:scaleX(0.9615);">Mujeres</div>
<div class="t" style="left:742.40px;top:494.89px;font-size:8.39px;font-weight:normal;color:#7c7c7c;transform-origin:0 50%;transform:scaleX(0.8696);">5%</div>
<div class="abs" style="left:797.5px;top:482px;width:11px;height:11px;background:#934ddd;border-radius:1.5px"></div>
<div class="t" style="left:814.00px;top:482.56px;font-size:9.67px;font-weight:normal;color:#555;transform-origin:0 50%;transform:scaleX(0.9615);">Hombres</div>
<div class="t" style="left:814.00px;top:494.89px;font-size:8.39px;font-weight:normal;color:#7c7c7c;transform-origin:0 50%;transform:scaleX(0.8696);">94.7%</div>
<div class="abs" style="left:296px;top:521px;width:650px;height:24px;background:#f1f1f1;border-radius:3px"></div>
<svg class="abs" style="left:566px;top:528.5px;overflow:visible;" width="7" height="9" viewBox="0 0 7 9"><rect x="0.3" y="0.3" width="6.4" height="8.4" rx="1" fill="#444"/><path d="M2 0.5v8" stroke="#888" stroke-width="0.6"/><path d="M3 2.5h2.6M3 4h2.6" stroke="#999" stroke-width="0.5"/></svg>
<div class="t" style="left:579.50px;top:528.46px;font-size:9.88px;font-weight:normal;color:#444;transform-origin:0 50%;transform:scaleX(0.9615);">Ver informe de público</div>
<div class="abs" style="left:999.5px;top:564px;width:20.5px;height:22px;background:#f4f5f8;border:1px solid #d6d8de;border-radius:2px"></div>
<svg class="abs" style="left:1004px;top:568.5px;overflow:visible;" width="12" height="12" viewBox="0 0 12 12"><defs><radialGradient id="gg" cx="0.35" cy="0.35" r="0.8"><stop offset="0" stop-color="#9fb2e6"/><stop offset="1" stop-color="#5571c0"/></radialGradient></defs><circle cx="6" cy="6" r="5.6" fill="url(#gg)"/><path d="M4 1.2 Q6.5 2.5 5.6 4.4 Q4.2 6 6.4 7 Q7.6 8 6.6 10.8" fill="none" stroke="#e4e9f7" stroke-width="1.5"/><path d="M8.5 2 Q10 3.5 9.8 5" fill="none" stroke="#e4e9f7" stroke-width="1"/></svg>
<div class="abs" style="left:38px;top:0px;width:986px;height:46px;background:#fafafa;box-shadow:0 1px 2px rgba(0,0,0,0.02)"></div>
<div class="abs" style="left:545px;top:0px;width:170px;height:32px;background:rgba(255,255,255,0.7);filter:blur(8px);border-radius:12px"></div>
<div class="t" style="left:106.00px;top:16.33px;font-size:13.61px;font-weight:bold;color:#444;transform-origin:0 50%;transform:scaleX(0.9259);">Estadísticas</div>
<div class="t" style="left:699.00px;top:18.18px;font-size:9.83px;font-weight:normal;color:#555;transform-origin:0 50%;transform:scaleX(0.9615);">3 cuentas</div>
<svg class="abs" style="left:747.5px;top:21.0px;overflow:visible;" width="7" height="4" viewBox="0 0 7 4"><path d="M0 0 L7 0 L3.5 4 Z" fill="#222"/></svg>
<svg class="abs" style="left:773px;top:17px;overflow:visible;" width="11" height="12" viewBox="0 0 11 12"><rect x="0.7" y="1.2" width="9.6" height="10.1" rx="1.6" fill="none" stroke="#3a3a3a" stroke-width="1.3"/><rect x="0.7" y="1.2" width="9.6" height="2.6" fill="#3a3a3a"/><path d="M3.9 3.8v7.2M7.1 3.8v7.2M1 6.3h9M1 8.7h9" stroke="#3a3a3a" stroke-width="0.9"/></svg>
<div class="abs" style="left:788px;top:14px;width:148px;height:18px;background:rgba(0,0,0,0.018);filter:blur(4px);border-radius:8px"></div>
<div class="abs" style="left:792px;top:18.5px;width:16px;height:9px;background:rgba(60,60,60,0.1);filter:blur(3px);border-radius:5px"></div>
<div class="abs" style="left:808px;top:18.5px;width:22px;height:9px;background:rgba(60,60,60,0.13);filter:blur(3px);border-radius:5px"></div>
<div class="abs" style="left:836px;top:18.5px;width:18px;height:9px;background:rgba(60,60,60,0.1);filter:blur(3px);border-radius:5px"></div>
<div class="abs" style="left:853px;top:18.5px;width:24px;height:9px;background:rgba(60,60,60,0.13);filter:blur(3px);border-radius:5px"></div>
<div class="abs" style="left:884px;top:18.5px;width:20px;height:9px;background:rgba(60,60,60,0.11);filter:blur(3px);border-radius:5px"></div>
<div class="abs" style="left:905px;top:18.5px;width:28px;height:9px;background:rgba(60,60,60,0.14);filter:blur(3px);border-radius:5px"></div>
<svg class="abs" style="left:939.5px;top:21.0px;overflow:visible;" width="7" height="4" viewBox="0 0 7 4"><path d="M0 0 L7 0 L3.5 4 Z" fill="#222"/></svg>
</body></html>
